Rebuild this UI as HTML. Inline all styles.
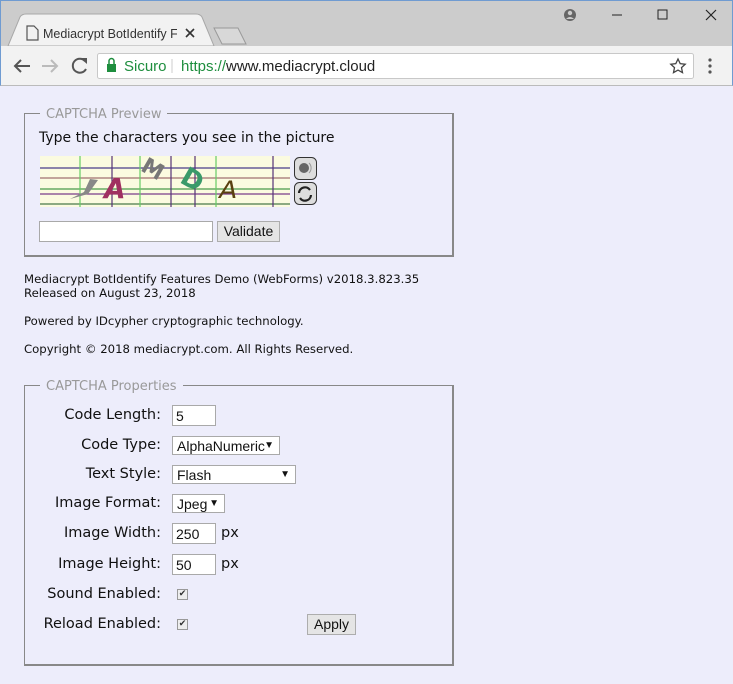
<!DOCTYPE html>
<html><head><meta charset="utf-8"><style>
*{margin:0;padding:0;box-sizing:border-box}
body{width:733px;height:684px;overflow:hidden;background:#ededfb;font-family:"DejaVu Sans",sans-serif;position:relative;color:#111}
.a{position:absolute;white-space:nowrap}
.top{position:absolute;left:0;top:0;width:733px;height:46px;background:#cccccc;border:1px solid #6f9bd1;border-bottom:none}
.tool{position:absolute;left:0;top:46px;width:733px;height:40px;background:#f2f2f2;border-left:1px solid #6f9bd1;border-right:1px solid #6f9bd1;border-bottom:1px solid #bbb}
.fs{position:absolute;border-color:#888;border-width:1px 2px 2px 1px;border-style:solid}
.leg{position:absolute;background:#ededfb;color:#999;font-size:13px;padding:0 6px}
.in{position:absolute;background:#fff;border:1px solid #a9a9a9;font-family:"Liberation Sans",sans-serif;font-size:14px;padding-left:3px;line-height:20px}
.btn{position:absolute;background:#e5e5e5;border:1px solid #adadad;font-family:"Liberation Sans",sans-serif;font-size:14px;text-align:center;line-height:19px}
.lbl{position:absolute;right:572px;font-size:14.5px;white-space:nowrap}
.sel{position:absolute;background:#fff;border:1px solid #a9a9a9;font-family:"Liberation Sans",sans-serif;font-size:14px;padding-left:4px;line-height:18px}
.sel span{position:absolute;right:5px;top:0;font-size:10px}
.t{position:absolute;left:24px;font-size:11.7px;white-space:nowrap}
.cb{position:absolute;width:11px;height:11px;border:1px solid #999;background:#eee;font-size:9px;line-height:9px;text-align:center;color:#333}
</style></head><body>
<div class="top"></div>
<svg class="a" style="left:0;top:0" width="733" height="46">
<path d="M8 46 L20 17 Q22 14 26 14 L196 14 Q200 14 202 17 L214 46 Z" fill="#f2f2f2" stroke="#a8a8a8"/>
<path d="M214 28 L238 28 L246 44 L222 44 Z" fill="#d8d8d8" stroke="#999"/>
<path d="M27 26 h7 l4 4 v10 h-11 z" fill="none" stroke="#555" stroke-width="1.2"/>
<path d="M186 29 l8 8 M194 29 l-8 8" stroke="#333" stroke-width="1.6"/>
<circle cx="570" cy="15" r="6" fill="#666"/><circle cx="570" cy="13" r="2.2" fill="#ccc"/><path d="M566 19 q4 -4 8 0" fill="#ccc"/>
<path d="M612 15 h10" stroke="#222"/>
<rect x="658" y="10" width="9" height="9" fill="none" stroke="#222"/>
<path d="M706 10 l10 10 M716 10 l-10 10" stroke="#222" stroke-width="1.2"/>
</svg>
<div class="a" style="left:43px;top:27px;width:134px;overflow:hidden;font-family:'Liberation Sans',sans-serif;font-size:12.5px;color:#333">Mediacrypt BotIdentify F<span style="color:#aaa">e</span></div>
<div class="tool"></div>
<svg class="a" style="left:0;top:46px" width="733" height="40">
<path d="M30 20 H15 M21 14 l-6 6 6 6" stroke="#555" stroke-width="2" fill="none"/>
<path d="M42 20 H57 M51 14 l6 6 -6 6" stroke="#bbb" stroke-width="2" fill="none"/>
<path d="M85 15 A7 7 0 1 0 86 23" stroke="#555" stroke-width="2" fill="none"/><path d="M80 12 h7 v6 z" fill="#555"/>
<rect x="97.5" y="7.5" width="596" height="25" fill="#fff" stroke="#c8c8c8" rx="2"/>
<rect x="107" y="18" width="9" height="8" fill="#1e8e3e"/><path d="M109 18 v-3 a2.5 2.5 0 0 1 5 0 v3" stroke="#1e8e3e" fill="none" stroke-width="1.5"/>
<path d="M172 13 v14" stroke="#ccc"/>
<path d="M678 13 l2.2 4.6 5 .6 -3.7 3.4 1 5 -4.5 -2.5 -4.5 2.5 1 -5 -3.7 -3.4 5 -.6z" fill="none" stroke="#444" stroke-width="1.3"/>
<circle cx="710" cy="14" r="1.6" fill="#555"/><circle cx="710" cy="20" r="1.6" fill="#555"/><circle cx="710" cy="26" r="1.6" fill="#555"/>
</svg>
<div class="a" style="left:124px;top:58px;font-family:'Liberation Sans',sans-serif;font-size:15px;color:#1e8e3e">Sicuro</div>
<div class="a" style="left:181px;top:58px;font-family:'Liberation Sans',sans-serif;font-size:15px;color:#1e8e3e">https://<span style="color:#222">www.mediacrypt.cloud</span></div>

<div class="fs" style="left:24px;top:113px;width:430px;height:144px"></div>
<div class="leg" style="left:40px;top:107px">CAPTCHA Preview</div>
<div class="a" style="left:39px;top:130px;font-size:14px">Type the characters you see in the picture</div>
<svg class="a" style="left:40px;top:156px" width="250" height="51">
<rect width="250" height="51" fill="#fbfbe0"/>
<g stroke-width="1.2"><path d="M0 12H250" stroke="#4a3d8a"/><path d="M0 22H250" stroke="#a07070"/><path d="M0 33H250" stroke="#4a9a4a"/><path d="M0 38H250" stroke="#7a3d8a"/><path d="M0 48H250" stroke="#4a7a4a"/>
<path d="M40 0V51M100 0V51M176 0V51" stroke="#6c6"/><path d="M72 0V51M131 0V51M155 0V51M233 0V51" stroke="#537"/></g>
<path d="M50 23 L58 24 L48 38 L30 43 L44 36 Z" fill="#888"/>
<text x="64" y="42" font-size="28" font-weight="bold" font-style="italic" fill="#a03060" font-family="DejaVu Sans">A</text>
<text x="98" y="20" font-size="22" font-weight="bold" fill="#777" transform="rotate(30 110 20)" font-family="DejaVu Sans">M</text>
<text x="138" y="32" font-size="26" font-weight="bold" fill="#3a9a6a" transform="rotate(30 150 30)" font-family="DejaVu Sans">D</text>
<text x="180" y="42" font-size="24" font-style="italic" fill="#5a4010" font-family="DejaVu Sans" transform="scale(1.1 1) translate(-17 0)">A</text>
</svg>
<svg class="a" style="left:294px;top:157px" width="24" height="49">
<rect x=".5" y=".5" width="22" height="22" rx="5" fill="#ddd" stroke="#333"/><circle cx="10" cy="11" r="5" fill="#666"/><path d="M15 6 a7 7 0 0 1 0 10" stroke="#999" fill="none"/>
<rect x=".5" y="25.5" width="22" height="22" rx="5" fill="#ddd" stroke="#333"/><path d="M5 36 a6 6 0 0 1 11 -3 M17 38 a6 6 0 0 1 -11 3" stroke="#222" stroke-width="2.2" fill="none"/>
</svg>
<div class="in" style="left:39px;top:221px;width:174px;height:21px"></div>
<div class="btn" style="left:217px;top:221px;width:63px;height:21px">Validate</div>

<div class="t" style="top:272px">Mediacrypt BotIdentify Features Demo (WebForms) v2018.3.823.35</div>
<div class="t" style="top:286px">Released on August 23, 2018</div>
<div class="t" style="top:314px">Powered by IDcypher cryptographic technology.</div>
<div class="t" style="top:342px">Copyright © 2018 mediacrypt.com. All Rights Reserved.</div>

<div class="fs" style="left:24px;top:385px;width:430px;height:281px"></div>
<div class="leg" style="left:40px;top:379px">CAPTCHA Properties</div>
<div class="lbl" style="top:407px">Code Length:</div>
<div class="in" style="left:172px;top:405px;width:44px;height:21px">5</div>
<div class="lbl" style="top:437px">Code Type:</div>
<div class="sel" style="left:172px;top:436px;width:108px;height:19px">AlphaNumeric<span>▼</span></div>
<div class="lbl" style="top:466px">Text Style:</div>
<div class="sel" style="left:172px;top:465px;width:124px;height:19px">Flash<span>▼</span></div>
<div class="lbl" style="top:495px">Image Format:</div>
<div class="sel" style="left:172px;top:494px;width:53px;height:19px">Jpeg<span>▼</span></div>
<div class="lbl" style="top:525px">Image Width:</div>
<div class="in" style="left:172px;top:523px;width:44px;height:21px">250</div>
<div class="a" style="left:221px;top:525px;font-size:14.5px">px</div>
<div class="lbl" style="top:556px">Image Height:</div>
<div class="in" style="left:172px;top:554px;width:44px;height:21px">50</div>
<div class="a" style="left:221px;top:556px;font-size:14.5px">px</div>
<div class="lbl" style="top:586px">Sound Enabled:</div>
<div class="cb" style="left:177px;top:589px">✔</div>
<div class="lbl" style="top:616px">Reload Enabled:</div>
<div class="cb" style="left:177px;top:619px">✔</div>
<div class="btn" style="left:307px;top:614px;width:49px;height:21px">Apply</div>
</body></html>
